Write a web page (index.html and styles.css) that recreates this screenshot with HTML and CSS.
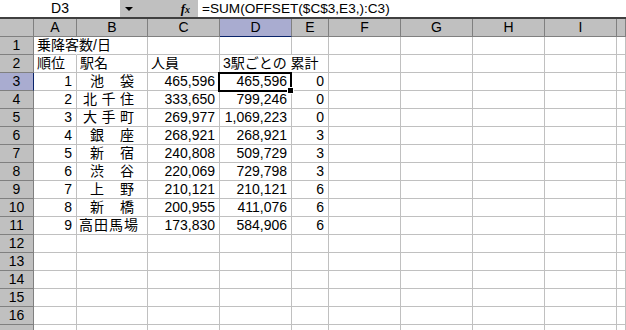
FILE: index.html
```html
<!DOCTYPE html>
<html lang="ja">

<head>
    <meta charset="UTF-8">
    <meta name="viewport" content="width=device-width, initial-scale=1.0">
    <title>乗降客数</title>
    <link rel="stylesheet" href="styles.css">
</head>

<body>
    <div class="formula-bar">
        <div class="name-box">D3</div>
        <div class="fx-area">
            <span class="arrow"></span>
            <span class="fx">f<span class="fx-sub">x</span></span>
        </div>
        <div class="formula">=SUM(OFFSET($C$3,E3,):C3)</div>
    </div>
    <div class="sheet" id="sheet">
        <div class="selection"><span class="handle"></span></div>
    </div>

    <script>
        const columns = ['A', 'B', 'C', 'D', 'E', 'F', 'G', 'H', 'I', ''];
        const stations = [
            [1, '池袋', 465596, 465596, 0],
            [2, '北千住', 333650, 799246, 0],
            [3, '大手町', 269977, 1069223, 0],
            [4, '銀座', 268921, 268921, 3],
            [5, '新宿', 240808, 509729, 3],
            [6, '渋谷', 220069, 729798, 3],
            [7, '上野', 210121, 210121, 6],
            [8, '新橋', 200955, 411076, 6],
            [9, '高田馬場', 173830, 584906, 6]
        ];

        const sheet = document.getElementById('sheet');

        function addCell(className, content) {
            const cell = document.createElement('div');
            cell.className = 'cell ' + className;
            if (content instanceof Node) {
                cell.appendChild(content);
            } else {
                cell.textContent = content;
            }
            sheet.appendChild(cell);
            return cell;
        }

        function nameCell(name) {
            const wrap = document.createElement('div');
            wrap.className = 'name name-' + name.length;
            [...name].forEach(ch => {
                const span = document.createElement('span');
                span.textContent = ch;
                wrap.appendChild(span);
            });
            return wrap;
        }

        // column headers
        addCell('head corner', '');
        columns.forEach(col => addCell(col === 'D' ? 'head active-col' : 'head', col));

        // row 17 only peeks in at the bottom edge, its number stays hidden
        for (let row = 1; row <= 17; row++) {
            const label = row < 17 ? row : '';
            addCell(row === 3 ? 'head row-head active-row' : 'head row-head', label);
            let values = ['', '', '', '', '', '', '', '', '', ''];
            let classes = ['', '', '', '', '', '', '', '', '', ''];
            if (row === 1) {
                values[0] = '乗降客数/日';
                classes[0] = 'spill';
            } else if (row === 2) {
                values = ['順位', '駅名', '人員', '3駅ごとの 累計', '', '', '', '', '', ''];
                classes[3] = 'spill';
            } else if (row - 3 < stations.length) {
                const s = stations[row - 3];
                values[0] = s[0];
                values[1] = nameCell(s[1]);
                values[2] = s[2].toLocaleString('en-US');
                values[3] = s[3].toLocaleString('en-US');
                values[4] = s[4];
                classes[0] = classes[2] = classes[3] = classes[4] = 'num';
                classes[1] = 'name-cell';
            }
            values.forEach((v, i) => addCell(classes[i], v));
        }
    </script>
</body>

</html>
```

FILE: styles.css
```css
body {
    margin: 0;
    font-family: "Liberation Sans", "Noto Sans CJK JP", sans-serif;
    font-size: 14px;
    color: #000;
    background: #fff;
    overflow: hidden;
}

.formula-bar {
    display: flex;
    height: 17px;
    border-bottom: 2px solid #404040;
    line-height: 17px;
}

.name-box {
    width: 120px;
    text-align: center;
}

.fx-area {
    width: 78px;
    background: #c0c0c0;
    display: flex;
    align-items: center;
    justify-content: space-between;
    padding: 0 8px 0 5px;
    box-sizing: border-box;
}

.arrow {
    width: 0;
    height: 0;
    border-left: 4px solid transparent;
    border-right: 4px solid transparent;
    border-top: 4px solid #000;
}

.fx {
    font-family: "Liberation Serif", serif;
    font-style: italic;
    font-weight: bold;
    font-size: 13px;
}

.fx-sub {
    font-size: 10px;
}

.formula {
    padding-left: 4px;
    font-size: 13.6px;
    white-space: nowrap;
}

.sheet {
    position: relative;
    display: grid;
    grid-template-columns: 34px 43px 71px 72px 72px 37px 72px 72px 72px 72px 9px;
    grid-auto-rows: 18px;
}

.cell {
    box-sizing: border-box;
    border-right: 1px solid #c0c0c0;
    border-bottom: 1px solid #c0c0c0;
    padding: 0 3px;
    line-height: 17px;
    white-space: nowrap;
}

.head {
    background: #c0c0c0;
    border-color: #808080;
    text-align: center;
    padding: 0;
}

.active-col {
    background: #a9acd0;
    border-bottom-color: #0a246a;
}

.active-row {
    background: #a9acd0;
    border-right-color: #0a246a;
}

.num {
    text-align: right;
    padding-right: 4px;
}

.spill {
    border-right-color: #fff;
    position: relative;
    z-index: 1;
}

.name-cell {
    padding: 0;
}

.name {
    display: flex;
    justify-content: space-between;
    padding: 0 13px 0 6px;
}

.name-2 {
    padding-left: 13px;
}

.name-4 {
    padding: 0 9px 0 2px;
}

.selection {
    position: absolute;
    left: 218px;
    top: 53px;
    width: 74px;
    height: 20px;
    box-sizing: border-box;
    border: 2px solid #000;
    z-index: 2;
}

.handle {
    position: absolute;
    right: -4px;
    bottom: -4px;
    width: 5px;
    height: 5px;
    background: #000;
    border: 1px solid #fff;
}
```
